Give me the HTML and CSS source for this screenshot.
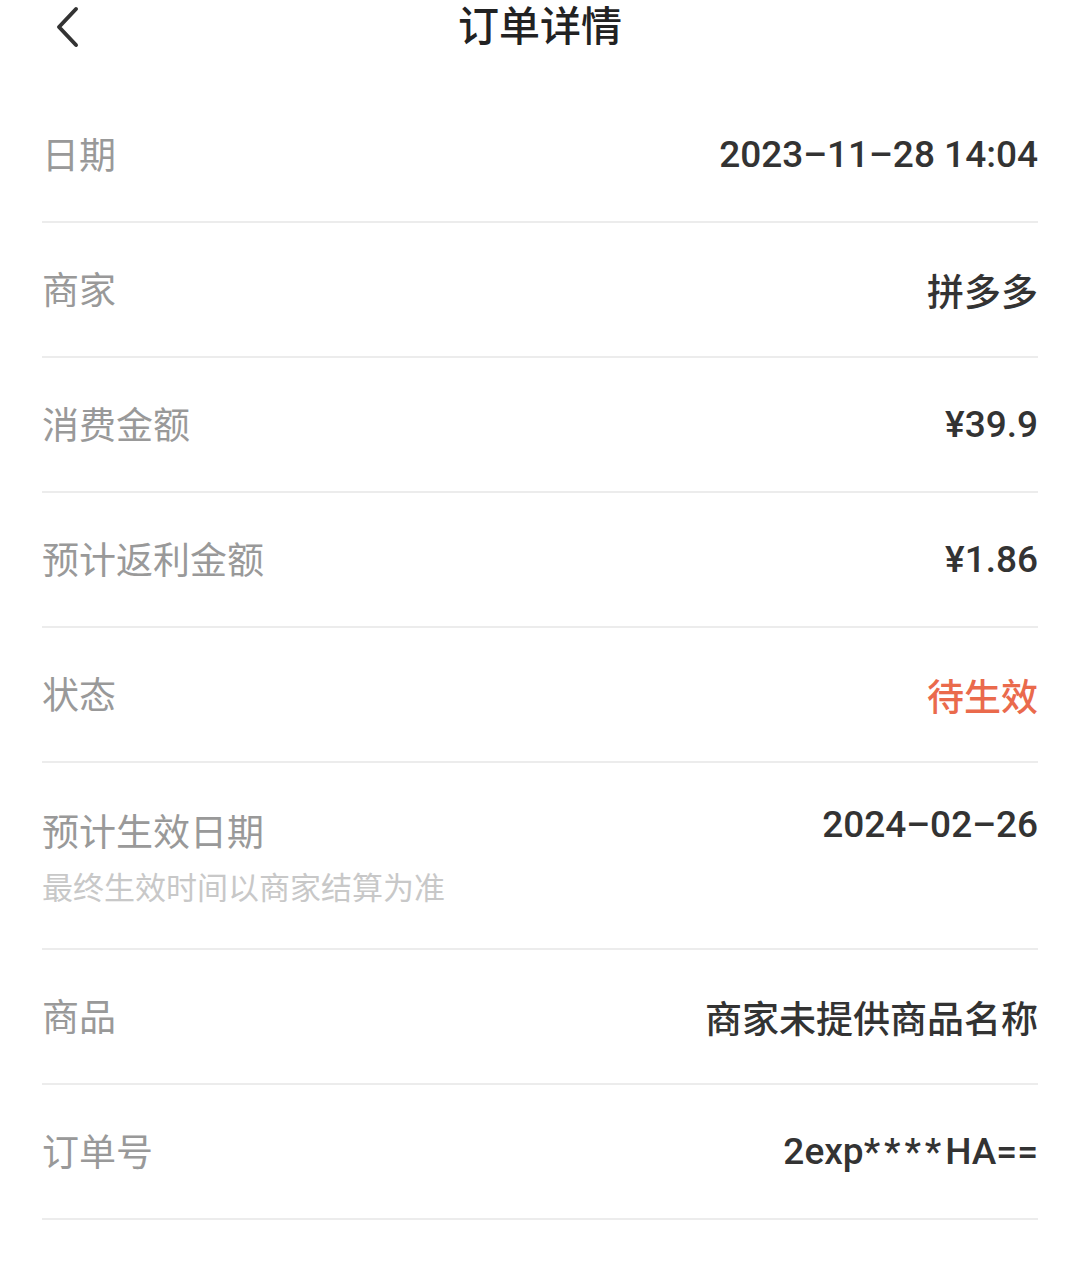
FILE: index.html
```html
<!DOCTYPE html>
<html>
<head>
  <title>订单详情</title>
  <link rel="stylesheet" href="styles.css">
</head>
<body>
  <div class="header">
    <a class="back">
      <svg width="28" height="42" viewBox="0 0 28 42"><path d="M23 3 L6 21 L23 39" fill="none" stroke="#333" stroke-width="4" stroke-linecap="round" stroke-linejoin="round"/></svg>
    </a>
    <h1 class="title">订单详情</h1>
  </div>

  <div class="list">
    <div class="row">
      <span class="label">日期</span>
      <span class="value">2023–11–28 14:04</span>
    </div>
    <div class="row">
      <span class="label">商家</span>
      <span class="value">拼多多</span>
    </div>
    <div class="row">
      <span class="label">消费金额</span>
      <span class="value">¥39.9</span>
    </div>
    <div class="row">
      <span class="label">预计返利金额</span>
      <span class="value">¥1.86</span>
    </div>
    <div class="row">
      <span class="label">状态</span>
      <span class="value pending">待生效</span>
    </div>
    <div class="row tall">
      <div class="label-group">
        <span class="label">预计生效日期</span>
        <span class="note">最终生效时间以商家结算为准</span>
      </div>
      <span class="value">2024–02–26</span>
    </div>
    <div class="row">
      <span class="label">商品</span>
      <span class="value">商家未提供商品名称</span>
    </div>
    <div class="row">
      <span class="label">订单号</span>
      <span class="value">2exp<span class="mask">****</span>HA==</span>
    </div>
  </div>
</body>
</html>
```

FILE: styles.css
```css
body {
  margin: 0;
  padding: 0;
  background: #fff;
  font-family: Roboto, "Noto Sans CJK SC", sans-serif;
}

.header {
  position: relative;
  height: 54px;
  text-align: center;
}
.back {
  position: absolute;
  left: 53px;
  top: 6px;
}
.title {
  margin: 0;
  font-size: 41px;
  font-weight: 500;
  line-height: 54px;
  color: #222;
}

.list {
  margin: 34px 42px 0;
}
.row {
  display: flex;
  justify-content: space-between;
  align-items: center;
  height: 133px;
  border-bottom: 2px solid #ececec;
}
.row > .label {
  margin-bottom: 4px;
}
.row.tall {
  height: 185px;
  align-items: flex-start;
}
.row.tall .label-group,
.row.tall .value {
  margin-top: 40px;
}
.label-group {
  display: flex;
  flex-direction: column;
}
.label {
  font-size: 37px;
  color: #999;
}
.note {
  margin-top: 6px;
  font-size: 31px;
  color: #c8c8c8;
}
.value {
  font-size: 37px;
  font-weight: 500;
  color: #333;
}
.value.pending {
  color: #ea6a4c;
}
.mask {
  letter-spacing: 4px;
}
```
